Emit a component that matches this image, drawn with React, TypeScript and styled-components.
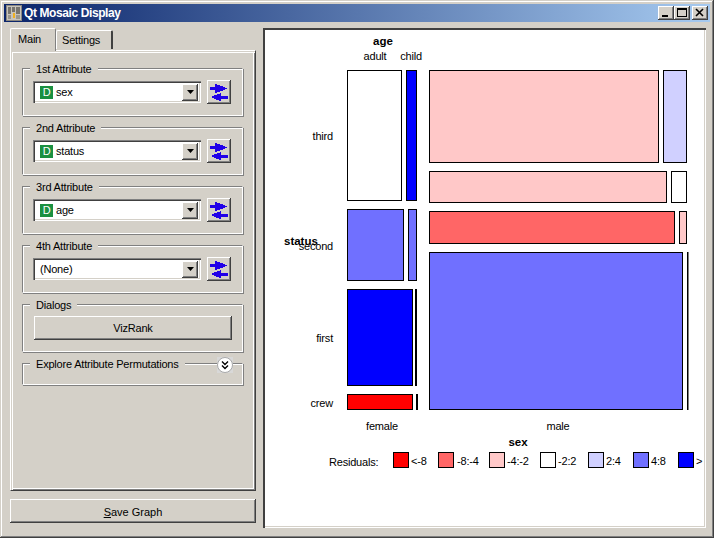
import { createGlobalStyle } from "styled-components";
import styled from "styled-components";

const GlobalStyle = createGlobalStyle`
  html, body {
    margin: 0;
    padding: 0;
    background: #d4d0c8;
  }
  body {
    font-family: "Liberation Sans", Arial, sans-serif;
    font-size: 11px;
    letter-spacing: -0.2px;
    color: #000;
  }
`;

const attributes = [
  { title: "1st Attribute", value: "sex", discrete: true },
  { title: "2nd Attribute", value: "status", discrete: true },
  { title: "3rd Attribute", value: "age", discrete: true },
  { title: "4th Attribute", value: "(None)", discrete: false },
];

const BLUE = "#0000ff";
const MID_BLUE = "#7070ff";
const PALE_BLUE = "#d0d0ff";
const RED = "#ff0000";
const MID_RED = "#ff6666";
const PINK = "#ffc8c8";
const WHITE = "#ffffff";

// x, y, width, height, fill - coordinates are inside the plot
const tiles: [number, number, number, number, string][] = [
  [84, 42, 54, 130, WHITE],
  [143, 42, 10, 130, BLUE],
  [84, 181, 56, 71, MID_BLUE],
  [145, 181, 8, 71, MID_BLUE],
  [84, 261, 65, 96, BLUE],
  [152, 261, 1, 96, WHITE],
  [84, 366, 65, 15, RED],
  [153, 366, 1, 15, WHITE],
  [166, 42, 229, 92, PINK],
  [400, 42, 23, 92, PALE_BLUE],
  [166, 143, 237, 31, PINK],
  [408, 143, 15, 31, WHITE],
  [166, 183, 245, 32, MID_RED],
  [416, 183, 7, 32, PINK],
  [166, 224, 253, 157, MID_BLUE],
  [424, 224, 0.5, 157, WHITE],
];

const legend: [number, number, string, string][] = [
  [130, 148, RED, "<-8"],
  [175, 194, MID_RED, "-8:-4"],
  [226, 244, PINK, "-4:-2"],
  [277, 295, WHITE, "-2:2"],
  [325, 343, PALE_BLUE, "2:4"],
  [370, 388, MID_BLUE, "4:8"],
  [415, 433, BLUE, ">"],
];

const SwapIcon = () => (
  <svg width="18" height="18" viewBox="0 0 18 18" shapeRendering="crispEdges">
    <path fill="#2000e8" d="M0 4h5V1l3 1 3 1 3 1 3 1.5-3 1.5-3 1-3 1-3 1V7H0z" />
    <path fill="#2000e8" d="M1 14l3-1.500 3-1 4-1.500v2.500h7v3h-7v2.500l-4-1-3-1.500z" />
  </svg>
);

const App = () => {
  return (
    <>
      <GlobalStyle />
      <Window>
        <TitleBar>
          <AppIcon>
            <svg width="16" height="16" viewBox="0 0 16 16">
              <rect x="0.5" y="0.5" width="15" height="15" fill="#c8c4bc" stroke="#8a8780" />
              <rect x="2" y="2" width="3" height="7" fill="#77746e" />
              <rect x="6" y="2" width="3" height="5" fill="#77746e" />
              <rect x="10" y="2" width="4" height="7" fill="#77746e" />
              <rect x="7" y="8" width="2" height="5" fill="#f0b020" />
              <rect x="2" y="10" width="3" height="4" fill="#9a978f" />
              <rect x="10" y="10" width="4" height="4" fill="#9a978f" />
            </svg>
          </AppIcon>
          <TitleText>Qt Mosaic Display</TitleText>
          <Controls>
            <ControlButton>
              <svg width="10" height="10" viewBox="0 0 10 10">
                <rect x="1" y="7" width="6" height="2" fill="#000" />
              </svg>
            </ControlButton>
            <ControlButton>
              <svg width="10" height="10" viewBox="0 0 10 10">
                <path fill="#000" fillRule="evenodd" d="M0 0h10v9H0zM1 2v6h8V2z" />
              </svg>
            </ControlButton>
            <CloseButton>
              <svg width="10" height="10" viewBox="0 0 10 10">
                <path stroke="#000" strokeWidth="1.6" d="M1 1l7 7M8 1l-7 7" />
              </svg>
            </CloseButton>
          </Controls>
        </TitleBar>

        <Body>
          <LeftColumn>
            <TabBar>
              <ActiveTab>Main</ActiveTab>
              <Tab>Settings</Tab>
            </TabBar>
            <TabPane>
              {attributes.map((attr) => (
                <Group key={attr.title}>
                  <GroupTitle>{attr.title}</GroupTitle>
                  <AttributeRow>
                    <Combo>
                      {attr.discrete && <TypeBadge>D</TypeBadge>}
                      <ComboValue $plain={!attr.discrete}>{attr.value}</ComboValue>
                      <ComboArrow>
                        <svg width="7" height="4" viewBox="0 0 7 4">
                          <path d="M0 0h7L3.500 4z" fill="#000" />
                        </svg>
                      </ComboArrow>
                    </Combo>
                    <SwapButton>
                      <SwapIcon />
                    </SwapButton>
                  </AttributeRow>
                </Group>
              ))}
              <Group>
                <GroupTitle>Dialogs</GroupTitle>
                <WideButton>VizRank</WideButton>
              </Group>
              <CollapsedGroup>
                <GroupTitle>Explore Attribute Permutations</GroupTitle>
                <ExpandButton>
                  <svg width="16" height="16" viewBox="0 0 16 16">
                    <rect width="16" height="16" fill="#d8d8d8" />
                    <circle cx="8" cy="8" r="7.500" fill="#fff" stroke="#a8a8a8" />
                    <path d="M5 4.500l3 3 3-3M5 8.500l3 3 3-3" fill="none" stroke="#000" strokeWidth="1.400" />
                  </svg>
                </ExpandButton>
              </CollapsedGroup>
            </TabPane>
            <SaveButton>
              <u>S</u>ave Graph
            </SaveButton>
          </LeftColumn>

          <Canvas>
            <Plot width="443" height="500" viewBox="0 0 443 500">
              <BoldLabel x="120" y="17" textAnchor="middle">age</BoldLabel>
              <PlotLabel x="112" y="32" textAnchor="middle">adult</PlotLabel>
              <PlotLabel x="148" y="32" textAnchor="middle">child</PlotLabel>

              <PlotLabel x="70" y="112" textAnchor="end">third</PlotLabel>
              <BoldLabel x="21" y="217">status</BoldLabel>
              <PlotLabel x="70" y="222" textAnchor="end">second</PlotLabel>
              <PlotLabel x="70" y="314" textAnchor="end">first</PlotLabel>
              <PlotLabel x="70" y="379" textAnchor="end">crew</PlotLabel>

              {tiles.map(([x, y, w, h, fill], i) => (
                <rect
                  key={i}
                  x={x + 0.5}
                  y={y + 0.5}
                  width={w}
                  height={h}
                  fill={fill}
                  stroke="#000"
                  strokeWidth="1"
                />
              ))}

              <PlotLabel x="119" y="402" textAnchor="middle">female</PlotLabel>
              <PlotLabel x="295" y="402" textAnchor="middle">male</PlotLabel>
              <BoldLabel x="255" y="418" textAnchor="middle">sex</BoldLabel>

              <PlotLabel x="66" y="438">Residuals:</PlotLabel>
              {legend.map(([boxX, textX, fill, label]) => (
                <g key={label}>
                  <rect x={boxX + 0.5} y={424.5} width="15" height="15" fill={fill} stroke="#000" />
                  <PlotLabel x={textX} y="437">{label}</PlotLabel>
                </g>
              ))}
            </Plot>
          </Canvas>
        </Body>
      </Window>
    </>
  );
};

export default App;

const Window = styled.div`
  box-sizing: border-box;
  width: 714px;
  height: 538px;
  padding: 4px;
  background: #d4d0c8;
  overflow: hidden;
  box-shadow: inset -1px -1px 0 #404040, inset 1px 1px 0 #d4d0c8,
    inset -2px -2px 0 #808080, inset 2px 2px 0 #ffffff;
`;

const TitleBar = styled.div`
  display: flex;
  align-items: center;
  height: 18px;
  padding: 0 2px;
  background: linear-gradient(90deg, #0a246a, #a6caf0);
`;

const AppIcon = styled.div`
  display: flex;
  width: 16px;
  height: 16px;
  margin-right: 2px;
`;

const TitleText = styled.div`
  flex: 1;
  color: #fff;
  font-size: 12px;
  font-weight: bold;
  letter-spacing: -0.4px;
  line-height: 18px;
`;

const Controls = styled.div`
  display: flex;
`;

const ControlButton = styled.div`
  box-sizing: border-box;
  display: flex;
  align-items: center;
  justify-content: center;
  width: 16px;
  height: 14px;
  background: #d4d0c8;
  box-shadow: inset -1px -1px 0 #404040, inset 1px 1px 0 #ffffff,
    inset -2px -2px 0 #808080;
`;

const CloseButton = styled(ControlButton)`
  margin-left: 2px;
`;

const Body = styled.div`
  display: flex;
  gap: 7px;
  padding: 6px 4px 6px 6px;
`;

const LeftColumn = styled.div`
  display: flex;
  flex-direction: column;
  width: 246px;
`;

const TabBar = styled.div`
  display: flex;
  align-items: flex-end;
  height: 22px;
  position: relative;
  z-index: 1;
`;

const Tab = styled.div`
  box-sizing: border-box;
  width: 57px;
  height: 19px;
  padding: 3px 0 0 5px;
  margin-bottom: 1px;
  background: #d4d0c8;
  border-top: 1px solid #fff;
  border-left: 1px solid #fff;
  border-right: 2px solid #404040;
  border-radius: 2px 2px 0 0;
`;

const ActiveTab = styled(Tab)`
  width: 46px;
  height: 23px;
  margin-bottom: -1px;
  padding: 4px 0 0 7px;
  border-right: 1px solid #808080;
`;

const TabPane = styled.div`
  box-sizing: border-box;
  display: flex;
  flex-direction: column;
  gap: 11px;
  height: 441px;
  padding: 17px 12px 0 11px;
  border: 1px solid #fff;
  border-right-color: #404040;
  border-bottom-color: #404040;
  box-shadow: inset 1px 1px 0 #d4d0c8, inset 2px 2px 0 #ffffff,
    inset -1px -1px 0 #808080, inset -2px -2px 0 #ffffff;
`;

const Group = styled.div`
  position: relative;
  box-sizing: border-box;
  height: 48px;
  padding: 11px 11px 0 10px;
  border: 1px solid #808080;
  border-right-color: #fff;
  border-bottom-color: #fff;
  box-shadow: inset 1px 1px 0 #fff, 1px 1px 0 #808080;
`;

const CollapsedGroup = styled(Group)`
  height: 22px;
`;

const GroupTitle = styled.span`
  position: absolute;
  top: -7px;
  left: 7px;
  padding: 0 6px;
  background: #d4d0c8;
  line-height: 14px;
  white-space: nowrap;
`;

const AttributeRow = styled.div`
  display: flex;
  gap: 6px;
  align-items: center;
`;

const Combo = styled.div`
  box-sizing: border-box;
  display: flex;
  align-items: center;
  width: 169px;
  height: 22px;
  padding: 2px;
  background: #fff;
  box-shadow: inset 1px 1px 0 #808080, inset 2px 2px 0 #404040,
    inset -1px -1px 0 #ffffff, inset -2px -2px 0 #d4d0c8;
`;

const TypeBadge = styled.span`
  display: block;
  width: 13px;
  height: 13px;
  margin: 0 3px 0 5px;
  background: #1a9040;
  color: #fff;
  line-height: 13px;
  text-align: center;
`;

const ComboValue = styled.span<{ $plain?: boolean }>`
  flex: 1;
  padding-left: ${(p) => (p.$plain ? "5px" : "0")};
`;

const ComboArrow = styled.div`
  box-sizing: border-box;
  display: flex;
  align-items: center;
  justify-content: center;
  width: 16px;
  height: 17px;
  margin-right: 1px;
  background: #d4d0c8;
  box-shadow: inset -1px -1px 0 #404040, inset 1px 1px 0 #ffffff,
    inset -2px -2px 0 #808080;
`;

const SwapButton = styled.div`
  box-sizing: border-box;
  display: flex;
  align-items: center;
  justify-content: center;
  width: 24px;
  height: 24px;
  background: #d4d0c8;
  box-shadow: inset -1px -1px 0 #404040, inset 1px 1px 0 #ffffff,
    inset -2px -2px 0 #808080;
`;

const WideButton = styled.div`
  box-sizing: border-box;
  width: 198px;
  height: 24px;
  margin-left: 1px;
  line-height: 24px;
  text-align: center;
  background: #d4d0c8;
  box-shadow: inset -1px -1px 0 #404040, inset 1px 1px 0 #ffffff,
    inset -2px -2px 0 #808080;
`;

const ExpandButton = styled.div`
  position: absolute;
  top: -7px;
  right: 9px;
  display: flex;
  width: 16px;
  height: 16px;
`;

const SaveButton = styled(WideButton)`
  width: 246px;
  margin: 8px 0 0;
  line-height: 26px;
  letter-spacing: 0;
`;

const Canvas = styled.div`
  box-sizing: border-box;
  width: 443px;
  height: 500px;
  background: #fff;
  box-shadow: inset 1px 1px 0 #404040, inset 2px 2px 0 #404040,
    inset -1px -1px 0 #ffffff, inset -2px -2px 0 #d4d0c8;
`;

const Plot = styled.svg`
  display: block;
`;

const PlotLabel = styled.text`
  font-family: "Liberation Sans", Arial, sans-serif;
  font-size: 11px;
  letter-spacing: -0.2px;
  fill: #000;
`;

const BoldLabel = styled(PlotLabel)`
  font-size: 11.5px;
  font-weight: bold;
  letter-spacing: 0;
`;
